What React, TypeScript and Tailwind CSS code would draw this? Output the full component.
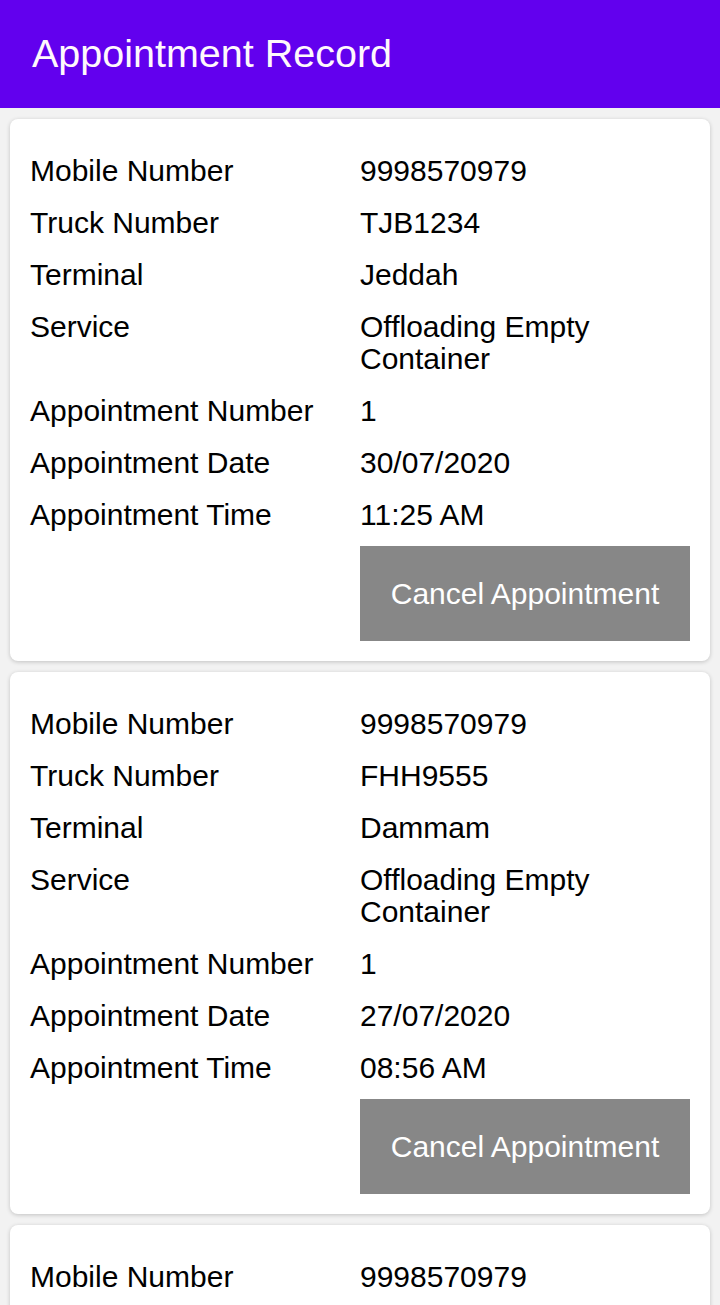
const records = [
  { mobile: "9998570979", truck: "TJB1234", terminal: "Jeddah", service: "Offloading Empty Container", num: "1", date: "30/07/2020", time: "11:25 AM" },
  { mobile: "9998570979", truck: "FHH9555", terminal: "Dammam", service: "Offloading Empty Container", num: "1", date: "27/07/2020", time: "08:56 AM" },
  { mobile: "9998570979", truck: "TJB1234", terminal: "Riyadh", service: "Offloading Empty Container", num: "1", date: "25/07/2020", time: "10:10 AM" },
];

function Row({ label, value }: { label: string; value: string }) {
  return (
    <div className="grid grid-cols-2 py-[10px] leading-[32px]">
      <p>{label}</p>
      <p className="pr-[60px]">{value}</p>
    </div>
  );
}

export default function App() {
  return (
    <div className="h-[1305px] overflow-hidden bg-[#f2f2f2] text-black" style={{ fontFamily: '"Liberation Sans", Arial, sans-serif' }}>
      <div className="h-[108px] bg-[#6200ee] flex items-center px-[32px]">
        <h1 className="text-[39.5px] text-[#fff8fc]">Appointment Record</h1>
      </div>
      <div className="px-[10px] pt-[11px] flex flex-col gap-[11px]">
        {records.map((r, i) => (
          <div key={i} className="bg-white rounded-[8px] shadow-[0_1px_4px_rgba(0,0,0,0.2)] px-[20px] pt-[26px] pb-[20px] text-[30px]">
            <Row label="Mobile Number" value={r.mobile} />
            <Row label="Truck Number" value={r.truck} />
            <Row label="Terminal" value={r.terminal} />
            <Row label="Service" value={r.service} />
            <Row label="Appointment Number" value={r.num} />
            <Row label="Appointment Date" value={r.date} />
            <Row label="Appointment Time" value={r.time} />
            <div className="grid grid-cols-2 mt-[5px]">
              <div />
              <button className="h-[95px] bg-[#878787] text-white text-[30px]">Cancel Appointment</button>
            </div>
          </div>
        ))}
      </div>
    </div>
  );
}
